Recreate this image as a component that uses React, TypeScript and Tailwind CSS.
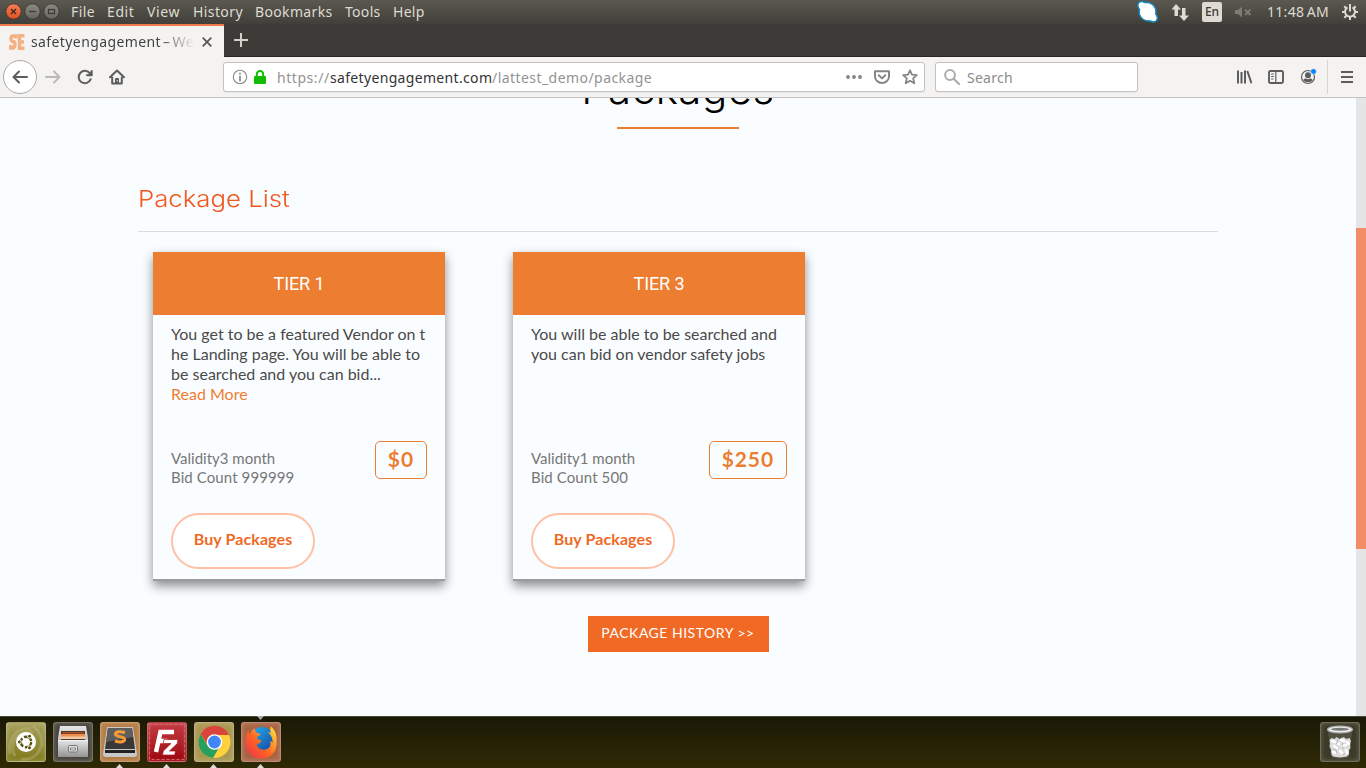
import type { ReactNode } from "react";

const menus = [
  { label: "File", cls: "w-9 tracking-[0.4px]" },
  { label: "Edit", cls: "w-10 tracking-[0.6px]" },
  { label: "View", cls: "w-[46px] tracking-[0.6px]" },
  { label: "History", cls: "w-[62px] tracking-[0.4px]" },
  { label: "Bookmarks", cls: "w-[90px] tracking-[0.35px]" },
  { label: "Tools", cls: "w-12 tracking-[0.3px]" },
  { label: "Help", cls: "w-10 tracking-[0.3px]" },
];

function WindowButtons() {
  return (
    <svg width="64" height="24" viewBox="0 0 64 24" className="shrink-0">
      <defs>
        <linearGradient id="closeBtn" x1="0" y1="0" x2="0" y2="1">
          <stop offset="0" stopColor="#f58057" />
          <stop offset="1" stopColor="#e0501f" />
        </linearGradient>
        <linearGradient id="greyBtn" x1="0" y1="0" x2="0" y2="1">
          <stop offset="0" stopColor="#8b8982" />
          <stop offset="1" stopColor="#67655f" />
        </linearGradient>
      </defs>
      <circle cx="13.500" cy="11.500" r="7.700" fill="url(#closeBtn)" stroke="#33322d" strokeWidth="0.8" />
      <circle cx="32.500" cy="11.500" r="7.700" fill="url(#greyBtn)" stroke="#33322d" strokeWidth="0.8" />
      <circle cx="51.500" cy="11.500" r="7.700" fill="url(#greyBtn)" stroke="#33322d" strokeWidth="0.8" />
      <path d="M11 9l5 5M16 9l-5 5" stroke="#43281d" strokeWidth="1.4" />
      <path d="M29 11.500h7" stroke="#3a3934" strokeWidth="1.3" />
      <rect x="48.500" y="9.500" width="6" height="4" fill="none" stroke="#3a3934" strokeWidth="1.2" />
    </svg>
  );
}

function TopBar() {
  return (
    <div className="flex h-6 items-center bg-linear-to-b from-[#5b594f] to-[#403f3a] text-[14px] leading-6 text-[#dfdbd2]">
      <WindowButtons />
      <div className="flex pl-[7px]">
        {menus.map((m) => (
          <span key={m.label} className={`shrink-0 whitespace-nowrap ${m.cls}`}>{m.label}</span>
        ))}
      </div>
      <div className="ml-auto flex h-6 w-[230px] shrink-0 items-center">
        <svg width="24" height="24" viewBox="0 0 24 24" className="shrink-0">
          <path d="M2.500 3C4 1 7 1.500 9 2.500c5-.5 9 2 10.500 6 .7 2 .3 4 .3 5.500 1.500 2 2 5 .5 6.800-1.800 1.500-4.300 1.200-6 .2C9.500 21.300 5 19 3.500 14.500c-.6-2-.2-4 0-5C1.800 7.500 1.500 5 2.500 3z" fill="#fff" stroke="#1687b8" strokeWidth="1.500" />
        </svg>
        <svg width="18" height="18" viewBox="0 0 18 18" className="ml-[11px] shrink-0" fill="#dfdbd2">
          <path d="M5 1l5 5.500H7V13H3.500V6.500H0.500zM13 18l-5-5.500h3V5h3.500v7.500h3.500z" />
        </svg>
        <span className="ml-[13px] flex h-5 w-5 shrink-0 items-center justify-center rounded-xs bg-[#dfdbd2] text-[12px] font-medium text-[#3c3b37]">En</span>
        <svg width="18" height="14" viewBox="0 0 18 14" className="ml-[12px] shrink-0">
          <path d="M1 5h3l4-3.500v11L4 9H1z" fill="#7d7b74" />
          <path d="M11 4.500l5.500 5.500M16.500 4.500L11 10" stroke="#7d7b74" strokeWidth="1.900" />
        </svg>
        <span className="ml-[15px] w-[62px] shrink-0 whitespace-nowrap tracking-[0.3px] [word-spacing:-1.500px]">11:48 AM</span>
        <svg width="18" height="18" viewBox="0 0 18 18" className="ml-[12px] shrink-0" fill="none" stroke="#dfdbd2">
          <path d="M6.500 4.300a5 5 0 1 0 5 0" strokeWidth="2" />
          <path d="M9 1v7.500" strokeWidth="2" />
          <path d="M1 9h2.500M14.500 9h2.500M9 14v3M3.300 3.300l2 2M14.700 3.300l-2 2M3.300 14.700l2-2M14.700 14.700l-2-2" strokeWidth="2" />
        </svg>
      </div>
    </div>
  );
}

function TabStrip() {
  return (
    <div className="flex h-[33px] border-b border-[#282724] bg-[#3c3b37]">
      <div className="-mb-px flex h-[33px] w-56 shrink-0 items-center border-t-2 border-[#f2794d] bg-[#f4f3f2] pl-[9px]">
        <svg width="16" height="16" viewBox="0 0 16 16" className="shrink-0" fill="none" stroke="#f4b183" strokeWidth="3.400">
          <path d="M7 4.500V2H4Q2 2 2 4.500T4 7.500q2 0 2 3T4 14H1.800V11" />
          <path d="M15.500 1.800H10.500V14.200H15.500M10 8h5" />
        </svg>
        <span className="ml-[6px] w-[164px] shrink-0 overflow-hidden bg-linear-to-r from-[#3e3e3e] from-[76%] to-[#f4f3f2] bg-clip-text text-[14px] leading-5 tracking-[0.4px] whitespace-nowrap text-transparent [word-spacing:-2px]">safetyengagement – We</span>
        <svg width="10" height="10" viewBox="0 0 10 10" className="ml-[7px] shrink-0" stroke="#555" strokeWidth="1.700">
          <path d="M0.700 0.700l8.600 8.600M9.300 0.700L0.700 9.300" />
        </svg>
      </div>
      <svg width="32" height="32" viewBox="0 0 32 32" className="shrink-0" stroke="#d3d0c8" strokeWidth="2">
        <path d="M10 16h14M17 9v14" />
      </svg>
    </div>
  );
}

function NavIcon({ children, cls, color = "#5d5d5d" }: { children: ReactNode; cls: string; color?: string }) {
  return (
    <svg width="16" height="16" viewBox="0 0 16 16" className={`shrink-0 ${cls}`} fill="none" stroke={color} strokeWidth="2" strokeLinecap="round" strokeLinejoin="round">
      {children}
    </svg>
  );
}

function NavBar() {
  return (
    <div className="flex h-[41px] items-center border-b border-[#c4c3c1] bg-[#f4f3f2] pl-[3px]">
      <div className="flex h-[34px] w-[34px] shrink-0 items-center justify-center rounded-full border border-[#aaa9a7] bg-white">
        <NavIcon cls=""><path d="M15 8H1.500M7 2.500L1.500 8L7 13.500" /></NavIcon>
      </div>
      <NavIcon cls="ml-[8px]" color="#bab9b8"><path d="M1 8h13.500M9 2.500L14.500 8L9 13.500" /></NavIcon>
      <NavIcon cls="ml-[16px]">
        <path d="M13 4.500A6.200 6.200 0 1 0 13.700 10.200" />
        <path d="M15.200 1.500V7H9.700z" fill="#5d5d5d" stroke="none" />
        <path d="M14.600 2v4.300H10" />
      </NavIcon>
      <NavIcon cls="ml-[16px]">
        <path d="M1 8.300L8 1.500L15 8.300M3.200 8.500V14.500H12.800V8.500" strokeWidth="2" />
        <path d="M6.500 14V9.500h3V14z" fill="#5d5d5d" strokeWidth="1" />
        <path d="M8.300 11.500v.5" stroke="#f4f3f2" strokeWidth="1" />
      </NavIcon>
      <div className="ml-[98px] flex h-[30px] w-[702px] shrink-0 items-center rounded-[3px] border border-[#c3c2c0] bg-white pl-[8px] shadow-xs">
        <NavIcon cls="" color="#8a8a8a">
          <circle cx="8" cy="8" r="6.700" strokeWidth="1.100" />
          <path d="M8 7.500v4M8 4.500v.3" strokeWidth="1.800" />
        </NavIcon>
        <svg width="14" height="16" viewBox="0 0 14 16" className="ml-[5px] shrink-0">
          <path d="M3.800 8V5.200a3.200 3.200 0 0 1 6.400 0V8" fill="none" stroke="#12bc00" strokeWidth="2" />
          <rect x="1" y="7" width="12" height="8" rx="1" fill="#12bc00" />
        </svg>
        <div className="ml-[10px] flex w-[560px] shrink-0 pt-px text-[14px] leading-5 whitespace-nowrap text-[#939393]">
          <span className="w-[53px] shrink-0 tracking-[0.55px]">https://</span>
          <span className="w-[162px] shrink-0 tracking-[0.33px] text-[#333]">safetyengagement.com</span>
          <span className="tracking-[0.44px]">/lattest_demo/package</span>
        </div>
        <NavIcon cls="ml-[9px]" color="#858585">
          <path d="M2 8h.01M8 8h.01M14 8h.01" strokeWidth="3.800" />
        </NavIcon>
        <NavIcon cls="ml-[12px]" color="#858585">
          <path d="M1 2.200h14V7.500a7 6.500 0 0 1-14 0z" />
          <path d="M4.700 6.200L8 9.400L11.300 6.200" />
        </NavIcon>
        <NavIcon cls="ml-[12px]" color="#858585">
          <path d="M8 1.300l2 4.400 4.800.5-3.600 3.200 1.100 4.900L8 11.800l-4.300 2.500 1.100-4.900L1.200 6.200 6 5.700z" strokeWidth="1.800" />
        </NavIcon>
      </div>
      <div className="ml-[10px] flex h-[30px] w-[203px] shrink-0 items-center rounded-[3px] border border-[#c3c2c0] bg-white pl-[8px] shadow-xs">
        <NavIcon cls="" color="#ababab">
          <circle cx="6" cy="6" r="4.900" />
          <path d="M9.700 9.700L15 15" strokeWidth="2.200" />
        </NavIcon>
        <span className="ml-[7px] pt-px text-[14px] leading-5 tracking-[0.25px] text-[#8c8c8c]">Search</span>
      </div>
      <NavIcon cls="ml-[98px]">
        <path d="M2 1.500v13M5.500 3v11.500M9 1.500v13M11.300 2L15.500 14.300" strokeLinecap="butt" strokeWidth="2" />
      </NavIcon>
      <NavIcon cls="ml-[16px]">
        <rect x="1" y="2" width="14" height="12" rx="1.500" strokeWidth="1.900" />
        <path d="M7.800 2v12" strokeWidth="1.200" />
        <path d="M3.500 5h2M3.500 7.500h2M3.500 10h1.500" strokeWidth="1" />
      </NavIcon>
      <svg width="18" height="18" viewBox="0 0 18 18" className="ml-[16px] shrink-0">
        <circle cx="8" cy="9" r="6.500" fill="none" stroke="#5d5d5d" strokeWidth="1.200" />
        <circle cx="8" cy="7.200" r="3" fill="#5d5d5d" />
        <path d="M3.300 12c1.500-2 2.500-1.500 3-1.200 1 .6 2.400.6 3.400 0 1-.7 2 0 3 1.200-1.500 3-7.900 3-9.400 0z" fill="#5d5d5d" />
        <circle cx="13.500" cy="3.500" r="2.800" fill="#0a84ff" stroke="#f4f3f2" strokeWidth=".5" />
      </svg>
      <span className="ml-[9px] h-[34px] w-px shrink-0 bg-[#d5d4d2]" />
      <NavIcon cls="ml-[11px]">
        <path d="M2 3h12M2 8h12M2 13h12" strokeLinecap="butt" />
      </NavIcon>
    </div>
  );
}

type Pack = { title: string; lines: string[]; more: boolean; validity: string; bids: string; price: string };

const packs: Pack[] = [
  {
    title: "TIER 1",
    lines: ["You get to be a featured Vendor on t", "he Landing page. You will be able to", "be searched and you can bid..."],
    more: true,
    validity: "Validity3 month",
    bids: "Bid Count 999999",
    price: "$0",
  },
  {
    title: "TIER 3",
    lines: ["You will be able to be searched and", "you can bid on vendor safety jobs"],
    more: false,
    validity: "Validity1 month",
    bids: "Bid Count 500",
    price: "$250",
  },
];

function PackageCard({ pack }: { pack: Pack }) {
  return (
    <article className="flex h-[329px] w-[292px] flex-col border-b-2 border-[#999c9e] font-['Lato',sans-serif] shadow-[0_5px_10px_rgba(0,0,0,0.45)]">
      <h3 className="flex h-[63px] shrink-0 items-center justify-center bg-[#ed7d31] font-['Roboto',sans-serif] text-[18px] tracking-[-0.1px] text-white">{pack.title}</h3>
      <div className="mt-[9px] h-[117px] pl-[18px] text-[16px] leading-5 whitespace-nowrap text-[#4a4a4a]">
        {pack.lines.map((line) => (
          <p key={line}>{line}</p>
        ))}
        {pack.more && <a className="block text-[#ed7d31]">Read More</a>}
      </div>
      <div className="flex h-[72px] justify-between px-[18px]">
        <div className="pt-[8px] text-[15px] leading-[19px] text-[#777]">
          <p>{pack.validity}</p>
          <p className="tracking-[0.1px]">{pack.bids}</p>
        </div>
        <span className="h-[38px] rounded-[5px] border border-[#ed7d31] px-3 text-[21px] leading-[34px] font-bold tracking-[0.9px] text-[#ed7d31]">{pack.price}</span>
      </div>
      <button className="ml-[18px] h-14 w-36 rounded-[28px] border-2 border-[#ffc0a6] bg-white pb-1 text-[16px] font-bold tracking-[0.1px] text-[#f06a25]">Buy Packages</button>
    </article>
  );
}

function PackagesPage() {
  return (
    <main className="flex h-[618px] overflow-hidden bg-[#fafdff]">
      <div className="flex flex-1 flex-col items-center">
        <h1 className="-mt-[34px] h-[63px] text-center font-['Inter',sans-serif] text-[42px] leading-[50px] font-light tracking-[0.5px] text-black">Packages</h1>
        <span className="h-[2px] w-[122px] shrink-0 bg-[#ed7d31]" />
        <section className="mt-[52px] w-[1080px]">
          <div className="h-[51px] border-b border-[#d9dde1]">
            <h2 className="w-fit origin-left scale-x-[1.12] font-['Inter',sans-serif] text-[23px] leading-[37px] font-light text-[#f0581e]">Package List</h2>
          </div>
          <div className="flex gap-[68px] pt-5 pl-[15px]">
            {packs.map((p) => (
              <PackageCard key={p.title} pack={p} />
            ))}
          </div>
        </section>
        <button className="mt-[35px] h-9 w-[181px] bg-[#f06a25] pb-[3px] font-['Lato',sans-serif] text-[14px] tracking-[0.5px] text-white">PACKAGE HISTORY &gt;&gt;</button>
      </div>
      <div className="w-[10px] bg-[#e5e5e5] pt-[130px]">
        <div className="h-[321px] bg-[#f28d67]" />
      </div>
    </main>
  );
}

function Launcher({ cls, running, focused, children }: { cls: string; running?: boolean; focused?: boolean; children: ReactNode }) {
  return (
    <div className="relative h-[51px] w-[47px] shrink-0 pt-[5px] pl-[6px]">
      <div className={`h-10 w-10 rounded-[3px] border border-white/25 shadow-[inset_0_0_5px_rgba(255,255,255,0.25)] ${cls}`}>
        <svg width="38" height="38" viewBox="0 0 38 38">{children}</svg>
      </div>
      {running && <span className="absolute bottom-0 left-[22px] h-1 w-[7px] bg-[#dcdcdc] [clip-path:polygon(50%_0,100%_100%,0_100%)]" />}
      {focused && <span className="absolute -top-px left-[22px] h-1 w-[7px] bg-[#aaa] [clip-path:polygon(0_0,100%_0,50%_100%)]" />}
    </div>
  );
}

function Dock() {
  return (
    <footer className="flex h-[52px] border-t border-[#4a4a3a] bg-linear-to-b from-[#1b1906] to-[#2f2a04]">
      <Launcher cls="bg-linear-to-b from-[#a6a05b] to-[#817a19]">
        <path d="M3 31C0 15 10 4 24 6M8 33C1 20 10 7 26 10M14 36C29 38 38 25 33 12M26 3Q36 10 35 24" fill="none" stroke="#cbc795" strokeWidth="3" opacity=".3" />
        <circle cx="19" cy="19" r="10" fill="#fff" />
        <circle cx="19" cy="19" r="5.200" fill="none" stroke="#57520d" strokeWidth="2.400" strokeDasharray="9.100 1.790" />
        <circle cx="12.300" cy="19" r="2" fill="#57520d" stroke="#fff" />
        <circle cx="22.500" cy="13.200" r="2" fill="#57520d" stroke="#fff" />
        <circle cx="22.500" cy="24.800" r="2" fill="#57520d" stroke="#fff" />
      </Launcher>
      <Launcher cls="bg-[#45433a]">
        <defs><linearGradient id="cab" x1="0" y1="0" x2="0" y2="1"><stop stopColor="#e6e6e6" /><stop offset="1" stopColor="#969696" /></linearGradient></defs>
        <path d="M6 3h26l2 12v19H4V15z" fill="url(#cab)" />
        <path d="M7 8h24v9H7z" fill="#4c3a30" />
        <path d="M8 9h22v1.500H8z" fill="#b14d22" /><path d="M7 11h24v4H7z" fill="#ed8d50" /><path d="M7 13.500h24V16H7z" fill="#f5c9a0" />
        <path d="M4 17h30v16.500H4z" fill="url(#cab)" /><path d="M4 17.500h30" stroke="#f4f4f4" />
        <rect x="14.500" y="22.500" width="9" height="6.500" rx="1" fill="#ddd" stroke="#777" />
        <path d="M16.500 25h5v2h-5z" fill="#fff" stroke="#666" strokeWidth=".8" />
      </Launcher>
      <Launcher running cls="bg-[#b47b43]">
        <path d="M6 4h26l4 27q0 3-3 3H5q-3 0-3-3z" fill="#c9c9c9" />
        <path d="M7 5h24l3 21H4z" fill="#383838" /><path d="M7 5h24l1 9L5 19z" fill="#5e5e5e" />
        <path d="M4 27h30v3H4z" fill="#222" />
        <path d="M24 9.500q-9-2-9.500 1.500c0 3.500 9.500 2 9 5.500-.5 3-5 3-9.500 1.500" fill="none" stroke="#f69b35" strokeWidth="3.200" />
      </Launcher>
      <Launcher running cls="bg-linear-to-b from-[#c33942] to-[#9d0008]">
        <rect x="1.500" y="1.500" width="35" height="35" fill="none" stroke="#d4666b" strokeDasharray="3 2" />
        <path d="M8 29L12.500 9H26M10.500 18H19.500" fill="none" stroke="#fff" strokeWidth="4.500" />
        <path d="M16 16.500H30L29.300 20.500L21.500 28H27.500L26.700 32H14.500L15.300 28L23 20.500H15.200z" fill="#fff" stroke="#a5141c" strokeWidth=".7" />
      </Launcher>
      <Launcher running cls="bg-[#a99751]">
        <circle cx="19.500" cy="19" r="16" fill="#ffd13d" />
        <path d="M5.600 11A16 16 0 0 1 34 12H19.500L13 22.500z" fill="#d9453d" />
        <path d="M5.600 11A16 16 0 0 0 18 35l7.500-13L12.500 22.500z" fill="#279f5e" />
        <circle cx="19.500" cy="19" r="7.800" fill="#fff" /><circle cx="19.500" cy="19" r="6.400" fill="#4285f4" />
      </Launcher>
      <Launcher running focused cls="bg-[#a86343]">
        <defs>
          <linearGradient id="fox" x1="0" y1="1" x2="1" y2="0"><stop stopColor="#ef2c55" /><stop offset=".45" stopColor="#ff6422" /><stop offset="1" stopColor="#ffe93c" /></linearGradient>
          <linearGradient id="globe" x1="0" y1="0" x2="1" y2="1"><stop stopColor="#20b6f2" /><stop offset="1" stopColor="#183f9c" /></linearGradient>
        </defs>
        <circle cx="20" cy="16.500" r="12.500" fill="url(#globe)" />
        <path d="M3.500 19C3.500 14 4.500 10 6.500 8q0 2.500 1.500 3.500Q9 7 12.500 5q0 3 2.500 5c2 .3 3.200 1 4 2-3 .3-4.500 2-4 4l4.500 1.500q-1 3-4.500 3.500c-.5 4.500 4.500 6.500 8.500 5.500 4.500-1 6-5 4.500-8.500 2 .3 2.500 2 2.500 2 .5-5-2-9-5-11l3.500.8c-1.500-3-.5-5.500 0-6.300 6 5.500 6 11 5.500 18C34 31 27 35.500 19 35.500 10 35.500 3.500 28 3.500 19z" fill="url(#fox)" />
      </Launcher>
      <div className="mr-[5px] ml-auto">
        <Launcher cls="bg-[#3d3b27]">
          <path d="M7 8l3 26q9 3 18 0L31 8z" fill="#7f7d72" opacity=".35" />
          <ellipse cx="19" cy="6.500" rx="12.500" ry="3.500" fill="#e9e9e9" stroke="#aaa" strokeWidth="1.200" />
          <ellipse cx="19" cy="6.300" rx="9" ry="1.500" fill="#777" />
          <path d="M8.500 17l2-2 3 1 2-2 3 2 4-2 3 2 3-1 1.500 3-1 3 .5 4-1.500 2v4l-2 2.500-7 1-7-1-1.500-2-.5-5-1.500-3 .5-3z" fill="#dcdcdc" />
          <path d="M11 18l3 1M20 17l3 1M26 19l2 2M13 23l3 2M21 23l4-1M12 29l3 1M19 28l2 2M25 27l1 3M17 20l1 1" fill="none" stroke="#fff" strokeWidth="2.500" strokeLinecap="round" />
          <path d="M16 16l1 3-2 2M22 20l-1 3 2 3M12 26l3 1 1 4M24 30l-2 2" fill="none" stroke="#aaa" strokeWidth=".8" />
        </Launcher>
      </div>
    </footer>
  );
}

export default function App() {
  return (
    <div className="flex h-[768px] w-[1366px] flex-col overflow-hidden font-['Noto_Sans',sans-serif]">
      <TopBar />
      <TabStrip />
      <NavBar />
      <PackagesPage />
      <Dock />
    </div>
  );
}
